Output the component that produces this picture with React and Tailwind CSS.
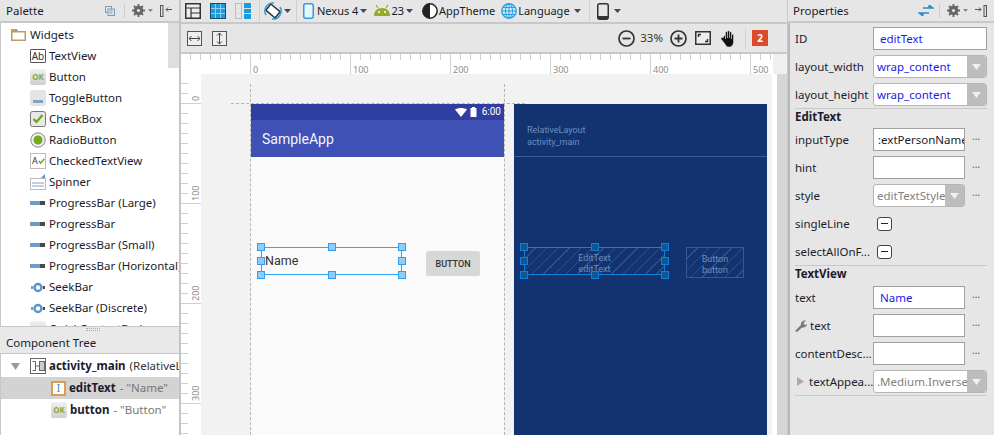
const widgets = [
  ['TextView', 'ab'],
  ['Button', 'ok'],
  ['ToggleButton', 'toggle'],
  ['CheckBox', 'check'],
  ['RadioButton', 'radio'],
  ['CheckedTextView', 'checked'],
  ['Spinner', 'spinner'],
  ['ProgressBar (Large)', 'bar'],
  ['ProgressBar', 'bar'],
  ['ProgressBar (Small)', 'bar'],
  ['ProgressBar (Horizontal)', 'bar'],
  ['SeekBar', 'seek'],
  ['SeekBar (Discrete)', 'seek'],
  ['QuickContactBadge', 'ok'],
];

function Caret({ className = '' }) {
  return (
    <svg width="7" height="4" viewBox="0 0 7 4" className={`shrink-0 ${className}`}>
      <path d="M0 0h7L3.5 4z" fill="#3d4a66" />
    </svg>
  );
}

function WidgetIcon({ type }) {
  if (type === 'ab') {
    return (
      <span className="flex h-[14px] w-[16px] shrink-0 items-center justify-center rounded-[1px] border border-[#555] bg-white text-[10px] leading-none text-[#333]">
        Ab
      </span>
    );
  }
  if (type === 'ok') {
    return (
      <span className="flex h-[16px] w-[16px] shrink-0 items-center justify-center rounded-[2px] bg-gradient-to-b from-[#f0f0f0] to-[#cfcfcf] text-[8px] font-bold leading-none text-[#8aa83a]">
        OK
      </span>
    );
  }
  if (type === 'toggle') {
    return (
      <svg width="16" height="16" viewBox="0 0 16 16">
        <rect width="16" height="16" rx="2" fill="#e4e4e4" />
        <rect x="3" y="10" width="10" height="3" fill="#7fa3c8" />
      </svg>
    );
  }
  if (type === 'check') {
    return (
      <svg width="16" height="16" viewBox="0 0 16 16">
        <rect x=".5" y=".5" width="15" height="15" rx="2" fill="#e8e8e8" stroke="#777" />
        <path d="M3.5 8l3 3 6-7" fill="none" stroke="#6aa51f" strokeWidth="2.2" />
      </svg>
    );
  }
  if (type === 'radio') {
    return (
      <svg width="16" height="16" viewBox="0 0 16 16">
        <circle cx="8" cy="8" r="7.2" fill="#eee" stroke="#888" />
        <circle cx="8" cy="8" r="4.5" fill="#70ac1c" />
      </svg>
    );
  }
  if (type === 'checked') {
    return (
      <span className="flex h-[16px] w-[16px] items-center border border-[#bbb] bg-white pl-[1px] text-[9px] leading-none text-[#333]">
        A
        <svg width="8" height="8" viewBox="0 0 8 8">
          <path d="M1 4l2 2.5L7 1.500" fill="none" stroke="#6aa51f" strokeWidth="1.500" />
        </svg>
      </span>
    );
  }
  if (type === 'spinner') {
    return (
      <svg width="16" height="16" viewBox="0 0 16 16">
        <rect x=".5" y="4.500" width="15" height="11" fill="#fff" stroke="#bbb" />
        <path d="M2 9h12M2 12h12" stroke="#7fa3c8" />
        <path d="M11 4l4-4v4z" fill="#5b8fc4" />
      </svg>
    );
  }
  if (type === 'bar') {
    return (
      <svg width="16" height="16" viewBox="0 0 16 16">
        <rect x="0" y="6" width="10" height="4" fill="#6f9cc6" />
        <rect x="10" y="6" width="5" height="4" fill="#4a4a4a" />
      </svg>
    );
  }
  return (
    <svg width="16" height="16" viewBox="0 0 16 16">
      <rect x="1" y="7" width="2" height="3" fill="#6f9cc6" />
      <circle cx="8" cy="8.500" r="3.500" fill="#fff" stroke="#5f93c4" strokeWidth="2.500" />
      <rect x="13" y="7" width="2" height="3" fill="#4a4a4a" />
    </svg>
  );
}

function Gear() {
  return (
    <svg width="13" height="13" viewBox="0 0 13 13">
      <circle cx="6.500" cy="6.500" r="3.500" fill="none" stroke="#666" strokeWidth="2.500" />
      <path d="M6.500 0v13M0 6.500h13M2 2l9 9M11 2l-9 9" stroke="#666" strokeWidth="1.800" />
      <circle cx="6.500" cy="6.500" r="1.600" fill="#e6e6e6" />
    </svg>
  );
}

function PanelGear() {
  return (
    <span className="flex items-center gap-[3px]">
      <Gear />
      <svg width="5" height="3" viewBox="0 0 5 3">
        <path d="M0 0h5L2.500 3z" fill="#888" />
      </svg>
    </span>
  );
}

function PaletteColumn() {
  return (
    <div className="flex h-full w-[181px] shrink-0 flex-col border-r-2 border-[#c4c4c4]">
      <div className="flex h-[23px] shrink-0 items-center border-b-2 border-[#c8c8c8] pl-[6px] pr-[7px]">
        <span className="flex-1">Palette</span>
        <svg width="10" height="10" viewBox="0 0 10 10" className="mr-[9px]">
          <rect x=".5" y=".5" width="6" height="6" fill="#e6e6e6" stroke="#7a9cb8" />
          <rect x="3" y="3" width="6.500" height="6.500" fill="#e6e6e6" stroke="#7a9cb8" />
          <path d="M4.500 5h3M4.500 7h3" stroke="#7a9cb8" />
        </svg>
        <span className="mr-[7px] h-[14px] w-px bg-[#ccc]" />
        <PanelGear />
        <svg width="12" height="12" viewBox="0 0 12 12" className="ml-[7px]">
          <rect x=".5" y=".5" width="2.500" height="11" fill="#ddd" stroke="#555" />
          <path d="M6 4.500h6M6 4.500l2-2M6 4.500l2 2" stroke="#555" fill="none" />
        </svg>
      </div>
      <div className="relative h-[303px] shrink-0 overflow-hidden border-l border-[#c8c8c8] bg-white pl-[10px] pt-[1px]">
        <div className="flex h-[21px] items-center gap-[4px]">
          <svg width="15" height="12" viewBox="0 0 15 12">
            <path d="M0 0h6l1 2h8v10H0z" fill="#c09a62" />
            <rect x="1.500" y="3.500" width="12" height="7" fill="#fff" />
          </svg>
          <span>Widgets</span>
        </div>
        {widgets.map(([name, icon]) => (
          <div key={name} className="flex h-[21px] items-center gap-[3px] pl-[19px]">
            <span className="flex w-[16px] justify-center">
              <WidgetIcon type={icon} />
            </span>
            <span className="whitespace-nowrap">{name}</span>
          </div>
        ))}
        <div className="absolute right-0 top-0 h-[45px] w-[11px] bg-[#dedede]" />
      </div>
      <div className="flex h-[28px] shrink-0 flex-col border-y border-[#c8c8c8] bg-[#e9e9e9] pl-[6px]">
        <div className="mx-auto mt-[1px] h-[3px] w-[14px] border-y border-dotted border-[#aaa]" />
        <span className="mt-[4px]">Component Tree</span>
      </div>
      <div className="flex-1 overflow-hidden border-l border-[#c8c8c8] bg-white pt-[1px]">
        <div className="flex h-[22px] items-center overflow-hidden whitespace-nowrap pl-[10px]">
          <svg width="9" height="7" viewBox="0 0 9 7" className="mr-[10px] shrink-0">
            <path d="M0 0h9L4.500 7z" fill="#999" />
          </svg>
          <svg width="16" height="16" viewBox="0 0 16 16" className="mr-[3px] shrink-0">
            <rect x=".5" y=".5" width="15" height="15" fill="#fff" stroke="#666" />
            <rect x="9.500" y="3.500" width="5" height="9" fill="#ccc" stroke="#666" />
            <path d="M2.500 3.500h3v9h-3M5.500 8h4" fill="none" stroke="#666" />
          </svg>
          <b className="font-bold">activity_main</b>
          <span className="ml-[4px] text-[#333]">(RelativeLayout)</span>
        </div>
        <div className="flex h-[22px] items-center whitespace-nowrap bg-[#d3d3d3] pl-[50px]">
          <span className="mr-[2px] flex h-[15px] w-[15px] shrink-0 items-center justify-center border-2 border-[#e09a4d] bg-white text-[10px] leading-none text-[#5b7fa8]">
            I
          </span>
          <b className="ml-[1px] font-bold">editText</b>
          <span className="ml-[4px] text-[#777]">- "Name"</span>
        </div>
        <div className="flex h-[22px] items-center whitespace-nowrap pl-[50px]">
          <WidgetIcon type="ok" />
          <b className="ml-[3px] font-bold">button</b>
          <span className="ml-[4px] text-[#777]">- "Button"</span>
        </div>
      </div>
    </div>
  );
}

function TopToolbar() {
  return (
    <div className="flex h-[24px] shrink-0 items-center border-b-2 border-[#c8c8c8] pl-[4px] text-[11px]">
      <svg width="16" height="16" viewBox="0 0 16 16">
        <rect x=".750" y=".750" width="14.500" height="14.500" fill="#eee" stroke="#333" strokeWidth="1.500" />
        <path d="M1 5h14M6 5v10M6 10h9" stroke="#333" strokeWidth="1.200" />
      </svg>
      <svg width="16" height="16" viewBox="0 0 16 16" className="ml-[9px]">
        <rect x=".500" y=".500" width="15" height="15" fill="#1b9be0" stroke="#1a4a6a" />
        <path d="M5.500 1v14M10.500 1v14M1 5.500h14M1 10.500h14" stroke="#8fd0f2" />
      </svg>
      <svg width="16" height="16" viewBox="0 0 16 16" className="ml-[9px]">
        <rect x=".500" y=".500" width="6" height="15" fill="#e8e8e8" stroke="#bbb" />
        <rect x="9" y="0" width="7" height="16" fill="#1b9be0" />
        <path d="M1 5.500h5M1 10.500h5M9 5.500h7M9 10.500h7" stroke="#ddd" />
      </svg>
      <span className="ml-[8px] h-[22px] w-px bg-[#d0d0d0]" />
      <svg width="18" height="18" viewBox="2 0 18 18" className="ml-[4px]">
        <path d="M4 13A8 8 0 0 1 12 1" fill="none" stroke="#29a3e0" strokeWidth="1.500" />
        <path d="M18 5a8 8 0 0 1-8 12" fill="none" stroke="#29a3e0" strokeWidth="1.500" />
        <rect x="5" y="5" width="12" height="8" rx="1" transform="rotate(40 11 9)" fill="#fff" stroke="#333" strokeWidth="1.500" />
      </svg>
      <Caret className="ml-[2px]" />
      <span className="ml-[5px] h-[22px] w-px bg-[#d0d0d0]" />
      <svg width="11" height="16" viewBox="0 0 11 16" className="ml-[6px]">
        <rect x=".750" y=".750" width="9.500" height="14.500" rx="2" fill="#e8f4fb" stroke="#2a9fe0" strokeWidth="1.500" />
      </svg>
      <span className="ml-[3px]">Nexus 4</span>
      <Caret className="ml-[2px]" />
      <svg width="16" height="12" viewBox="0 0 16 12" className="ml-[7px]">
        <path d="M0 11C0 6 3 3 8 3s8 3 8 8z M0 11h16" fill="#95ab2c" />
        <path d="M2 0l2 3M14 0l-2 3" stroke="#95ab2c" strokeWidth="1.200" />
        <circle cx="5" cy="7" r="1" fill="#fff" />
        <circle cx="11" cy="7" r="1" fill="#fff" />
      </svg>
      <span className="ml-[1px]">23</span>
      <Caret className="ml-[2px]" />
      <svg width="16" height="16" viewBox="0 0 16 16" className="ml-[9px]">
        <circle cx="8" cy="8" r="7.200" fill="#fff" stroke="#222" strokeWidth="1.500" />
        <path d="M8 .8a7.200 7.200 0 0 0 0 14.400z" fill="#222" />
      </svg>
      <span className="ml-[1px]">AppTheme</span>
      <svg width="16" height="16" viewBox="0 0 16 16" className="ml-[6px]">
        <circle cx="8" cy="8" r="7.200" fill="#cfeafa" stroke="#2a9fe0" strokeWidth="1.400" />
        <path d="M1 8h14M8 1v14M2 4.500h12M2 11.500h12" stroke="#2a9fe0" />
        <ellipse cx="8" cy="8" rx="3.500" ry="7.200" fill="none" stroke="#2a9fe0" />
      </svg>
      <span className="ml-[1px]">Language</span>
      <Caret className="ml-[4px]" />
      <span className="ml-[8px] h-[22px] w-px bg-[#d0d0d0]" />
      <svg width="12" height="17" viewBox="0 0 12 17" className="ml-[7px]">
        <rect x=".750" y=".750" width="10.500" height="15.500" rx="2" fill="#e6e6e6" stroke="#333" strokeWidth="1.500" />
        <rect x="1" y="13" width="10" height="3" fill="#333" />
      </svg>
      <Caret className="ml-[5px]" />
    </div>
  );
}

function SecondToolbar() {
  return (
    <div className="flex h-[30px] shrink-0 items-center border-b-2 border-[#c8c8c8] pl-[6px]">
      <span className="flex h-[15px] w-[15px] items-center justify-center border border-[#555] bg-[#eee]">
        <svg width="11" height="7" viewBox="0 0 11 7">
          <path d="M0 3.500h11M2.500 1L0 3.500 2.500 6M8.500 1L11 3.500 8.500 6" fill="none" stroke="#444" />
        </svg>
      </span>
      <span className="ml-[10px] flex h-[15px] w-[15px] items-center justify-center border border-[#555] bg-[#eee]">
        <svg width="7" height="11" viewBox="0 0 7 11">
          <path d="M3.500 0v11M1 2.500L3.500 0 6 2.500M1 8.500L3.500 11 6 8.500" fill="none" stroke="#444" />
        </svg>
      </span>
      <div className="flex-1" />
      <svg width="17" height="17" viewBox="0 0 17 17">
        <circle cx="8.500" cy="8.500" r="7.500" fill="none" stroke="#333" strokeWidth="1.700" />
        <path d="M4.500 8.500h8" stroke="#333" strokeWidth="1.800" />
      </svg>
      <span className="ml-[5px] text-[#333]">33%</span>
      <svg width="17" height="17" viewBox="0 0 17 17" className="ml-[7px]">
        <circle cx="8.500" cy="8.500" r="7.500" fill="none" stroke="#333" strokeWidth="1.700" />
        <path d="M4.500 8.500h8M8.500 4.500v8" stroke="#333" strokeWidth="1.800" />
      </svg>
      <svg width="16" height="14" viewBox="0 0 16 14" className="ml-[8px]">
        <rect x=".750" y=".750" width="14.500" height="12.500" fill="#eee" stroke="#333" strokeWidth="1.500" />
        <path d="M3.500 6V3.500H6M12.500 8v2.500H10" fill="none" stroke="#333" strokeWidth="1.500" />
      </svg>
      <svg width="16" height="17" viewBox="0 0 16 17" className="ml-[10px]">
        <path d="M3 6c0-1 1.500-1 1.500 0v3V2.500c0-1 2-1 2 0V8 1.500c0-1 2-1 2 0V8 2.500c0-1 2-1 2 0V9 5c0-1 2-1 2 0v7c0 3-2 5-4.500 5S5 16 4 14L0 9c-.5-1 1-2 2-1z" fill="#111" stroke="#fff" strokeWidth=".4" />
      </svg>
      <span className="ml-[8px] mr-[6px] h-[21px] w-px bg-[#d0d0d0]" />
      <span className="flex h-[16px] w-[16px] items-center justify-center bg-[#dc4a2e] text-[10px] font-bold leading-none text-white">
        2
      </span>
      <div className="w-[19px]" />
    </div>
  );
}

const hTicks = Array.from({ length: 60 }, (_, i) => 9.5 + i * 10);
const vTicks = Array.from({ length: 38 }, (_, i) => -0.5 + i * 10);

function TopRuler() {
  return (
    <div className="flex h-[20px] shrink-0">
      <svg width="592" height="20" viewBox="0 0 592 20" className="bg-white">
        {hTicks.map((x, i) => (
          <line key={x} x1={x} x2={x} y1="0" y2={i % 10 === 6 ? 20 : 6} stroke="#cfcfcf" />
        ))}
        <text x="72" y="18.500" fontSize="9" fill="#8c8c8c">0</text>
        <text x="172" y="18.500" fontSize="9" fill="#8c8c8c">100</text>
        <text x="272" y="18.500" fontSize="9" fill="#8c8c8c">200</text>
        <text x="372" y="18.500" fontSize="9" fill="#8c8c8c">300</text>
        <text x="472" y="18.500" fontSize="9" fill="#8c8c8c">400</text>
        <text x="572" y="18.500" fontSize="9" fill="#8c8c8c">500</text>
      </svg>
      <div className="flex-1 bg-[#efefef]" />
    </div>
  );
}

function SideRuler() {
  return (
    <svg width="20" height="361" viewBox="0 0 20 361" className="shrink-0 bg-white">
      {vTicks.map((y, i) => (
        <line key={y} x1="0" x2={i % 10 === 3 ? 20 : 7} y1={y} y2={y} stroke="#cfcfcf" />
      ))}
      <text x="0" y="0" fontSize="9" fill="#8c8c8c" transform="translate(18 27) rotate(-90)">0</text>
      <text x="0" y="0" fontSize="9" fill="#8c8c8c" transform="translate(18 127) rotate(-90)">100</text>
      <text x="0" y="0" fontSize="9" fill="#8c8c8c" transform="translate(18 227) rotate(-90)">200</text>
      <text x="0" y="0" fontSize="9" fill="#8c8c8c" transform="translate(18 327) rotate(-90)">300</text>
    </svg>
  );
}

function Handle({ className, blue }) {
  return (
    <span
      className={`absolute h-[8px] w-[8px] border ${
        blue ? 'border-[#0f7fe0] bg-[#12568f]' : 'border-[#2f9ff0] bg-[#8fcdf8]'
      } ${className}`}
    />
  );
}

function Handles({ blue }) {
  return (
    <>
      <Handle blue={blue} className="left-[-5px] top-[-5px]" />
      <Handle blue={blue} className="left-[calc(50%-4px)] top-[-5px]" />
      <Handle blue={blue} className="right-[-5px] top-[-5px]" />
      <Handle blue={blue} className="left-[-5px] top-[calc(50%-4px)]" />
      <Handle blue={blue} className="right-[-5px] top-[calc(50%-4px)]" />
      <Handle blue={blue} className="bottom-[-5px] left-[-5px]" />
      <Handle blue={blue} className="bottom-[-5px] left-[calc(50%-4px)]" />
      <Handle blue={blue} className="bottom-[-5px] right-[-5px]" />
    </>
  );
}

const hatch = 'bg-[repeating-linear-gradient(135deg,transparent_0,transparent_7px,#2e5288_7px,#2e5288_8px)]';

function DesignPhone() {
  return (
    <div className="flex w-[253px] shrink-0 flex-col bg-[#fafafa] font-['Roboto',sans-serif]">
      <div className="flex h-[16px] shrink-0 items-center justify-end bg-[#303f9f] pr-[3px] text-[10px] leading-none text-white">
        <svg width="12" height="9" viewBox="0 0 12 9">
          <path d="M0 1.500C3.500-.5 8.500-.5 12 1.500L6 9z" fill="#fff" />
        </svg>
        <svg width="7" height="10" viewBox="0 0 6 10" className="ml-[3px] mr-[5px]">
          <path d="M1.500 0h3v1H6v9H0V1h1.500z" fill="#fff" />
        </svg>
        6:00
      </div>
      <div className="flex h-[37px] shrink-0 items-center bg-[#3f51b5] pl-[11px] text-[14px] text-[#f4f4fb]">
        SampleApp
      </div>
      <div className="mt-[90px] flex items-start">
        <div className="relative ml-[10px] flex h-[28px] w-[141px] shrink-0 items-center border border-[#39a2ee] pl-[3px] text-[12.5px] leading-none text-[#333]">
          Name
          <Handles />
        </div>
        <div className="ml-[24px] mt-[4px] flex h-[25px] w-[54px] shrink-0 items-center justify-center rounded-[2px] bg-[#d6d7d7] text-[9px] font-medium text-[#333]">
          BUTTON
        </div>
      </div>
    </div>
  );
}

function BlueprintPhone() {
  return (
    <div className="flex w-[253px] shrink-0 flex-col bg-[#12336f] text-[9px] leading-[11px] text-[#6d8ebf] font-['Roboto',sans-serif]">
      <div className="h-[53px] shrink-0 border-b border-[#3d5d92] pl-[13px] pt-[20px] leading-[12px]">
        <div>RelativeLayout</div>
        <div>activity_main</div>
      </div>
      <div className="mt-[90px] flex items-start">
        <div className={`relative ml-[10px] flex h-[28px] w-[141px] shrink-0 flex-col items-center justify-center border border-[#0f7fe0] pt-[5px] ${hatch}`}>
          <div>EditText</div>
          <div>editText</div>
          <Handles blue />
        </div>
        <div className={`ml-[21px] flex h-[31px] w-[58px] shrink-0 flex-col items-center justify-center border border-[#355a94] pt-[4px] ${hatch}`}>
          <div>Button</div>
          <div>button</div>
        </div>
      </div>
    </div>
  );
}

function Canvas() {
  return (
    <div className="relative flex min-w-0 flex-1 overflow-hidden bg-[#f2f2f2] pl-[50px] pt-[30px]">
      <div className="flex gap-[10px]">
        <DesignPhone />
        <BlueprintPhone />
      </div>
      {/* guide lines over the design */}
      <div className="absolute left-[30px] top-[29px] w-[294px] border-t border-dashed border-[#b5b5b5]" />
      <div className="absolute bottom-0 left-[49px] top-[10px] border-l border-dashed border-[#b5b5b5]" />
      <div className="absolute bottom-0 left-[303px] top-[10px] border-l border-dashed border-[#b5b5b5]" />
      <div className="absolute bottom-0 right-0 top-0 w-[5px] bg-white" />
    </div>
  );
}

function Label({ children, className = '' }) {
  return <span className={`w-[78px] shrink-0 overflow-hidden whitespace-nowrap ${className}`}>{children}</span>;
}

function Dots() {
  return <span className="ml-[4px] mt-[-8px] w-[14px] text-center text-[10px] leading-none text-[#555]">...</span>;
}

function Field({ label, value, blue, clip }) {
  return (
    <div className="flex h-[23px] items-center">
      <Label>{label}</Label>
      <div
        className={`flex h-[23px] w-[92px] shrink-0 items-center overflow-hidden whitespace-nowrap border border-[#a0a0a0] bg-white ${
          clip ? 'pl-[4px]' : 'pl-[6px]'
        } ${blue ? 'text-[#1a1ae6]' : ''}`}
      >
        {value}
      </div>
      <Dots />
    </div>
  );
}

function Select({ label, value, wide, blue, muted }) {
  return (
    <div className="flex h-[23px] items-center">
      {label}
      <div
        className={`flex h-[23px] shrink-0 items-center overflow-hidden rounded-[3px] border border-[#b5b5b5] bg-white ${
          wide ? 'w-[114px]' : 'w-[92px]'
        }`}
      >
        <span
          className={`min-w-0 flex-1 overflow-hidden whitespace-nowrap pl-[3px] ${blue ? 'text-[#1a1ae6]' : ''} ${
            muted ? 'text-[#808080]' : ''
          }`}
        >
          {value}
        </span>
        <span className="flex h-full w-[19px] shrink-0 items-center justify-center bg-[#bdbdbd]">
          <svg width="9" height="6" viewBox="0 0 9 6">
            <path d="M0 0h9L4.500 6z" fill="#f0f0f0" />
          </svg>
        </span>
      </div>
      {!wide && <Dots />}
    </div>
  );
}

function CheckRow({ label }) {
  return (
    <div className="flex h-[23px] items-center">
      <Label>{label}</Label>
      <span className="ml-[4px] flex h-[14px] w-[15px] items-center justify-center rounded-[3px] border border-[#444] bg-white">
        <span className="h-px w-[7px] bg-[#222]" />
      </span>
    </div>
  );
}

function PropertiesColumn() {
  return (
    <div className="flex h-full min-w-0 flex-1 flex-col border-l border-[#c8c8c8]">
      <div className="flex h-[23px] shrink-0 items-center border-b-2 border-[#c8c8c8] pl-[5px] pr-[7px]">
        <span className="flex-1">Properties</span>
        <svg width="16" height="11" viewBox="0 0 16 11" className="mr-[5px]">
          <path d="M5 3h10M11 0l4 3h-4zM11 8H1M5 11L1 8h4z" fill="#2a8fc8" stroke="#2a8fc8" strokeWidth="1.300" />
        </svg>
        <span className="mr-[7px] h-[14px] w-px bg-[#ccc]" />
        <PanelGear />
        <svg width="12" height="12" viewBox="0 0 12 12" className="ml-[7px]">
          <rect x="9" y=".500" width="2.500" height="11" fill="#ddd" stroke="#555" />
          <path d="M0 4.500h6M6 4.500l-2-2M6 4.500l-2 2" stroke="#555" fill="none" />
        </svg>
      </div>
      <div className="flex flex-1 flex-col gap-[5px] overflow-hidden border-l-2 border-[#b8b8b8] pl-[5px] pt-[4px]">
        <div className="flex h-[23px] items-center">
          <Label>ID</Label>
          <div className="flex h-[23px] w-[114px] items-center border border-[#a0a0a0] bg-white pl-[6px] text-[#1a1ae6]">
            editText
          </div>
        </div>
        <Select wide blue label={<Label>layout_width</Label>} value="wrap_content" />
        <Select wide blue label={<Label>layout_height</Label>} value="wrap_content" />
        <div className="mr-[7px] mt-[-3px] h-[15px] border-t border-[#c8c8c8] font-bold leading-[16px]">EditText</div>
        <Field label="inputType" value=":extPersonName" clip />
        <Field label="hint" value="" />
        <Select label={<Label>style</Label>} muted value="editTextStyle" />
        <CheckRow label="singleLine" />
        <CheckRow label="selectAllOnF..." />
        <div className="mr-[7px] mt-[-3px] h-[16px] border-t border-[#c8c8c8] font-bold leading-[16px]">TextView</div>
        <Field label="text" value="Name" blue />
        <Field
          label={
            <span className="flex items-center gap-[3px]">
              <svg width="12" height="12" viewBox="0 0 12 12">
                <path d="M0 11l6-6c-.5-2 1-5 5-4.500L8.500 3 9 4.500l2 .5 1-2c0 4-3 5-5 4.500L2 12z" fill="#777" />
              </svg>
              text
            </span>
          }
          value=""
        />
        <Field label="contentDesc..." value="" />
        <Select
          wide
          muted
          label={
            <Label className="flex items-center gap-[5px] pl-[2px]">
              <svg width="7" height="9" viewBox="0 0 7 9" className="shrink-0">
                <path d="M0 0l7 4.500L0 9z" fill="#aaa" />
              </svg>
              textAppea...
            </Label>
          }
          value=".Medium.Inverse"
        />
        <div className="mr-[7px] mt-[-3px] border-t border-[#c8c8c8]" />
      </div>
    </div>
  );
}

export default function App() {
  return (
    <div className="flex h-[435px] w-[994px] overflow-hidden bg-[#e6e6e6] text-[11.5px] leading-[16px] text-[#1b1b2b] font-['Noto_Sans',sans-serif]">
      <PaletteColumn />
      <div className="flex h-full w-[606px] shrink-0 flex-col">
        <TopToolbar />
        <SecondToolbar />
        <TopRuler />
        <div className="flex min-h-0 flex-1">
          <SideRuler />
          <Canvas />
          <div className="w-[10px] shrink-0 bg-[#d6d6d6]" />
        </div>
      </div>
      <PropertiesColumn />
    </div>
  );
}
